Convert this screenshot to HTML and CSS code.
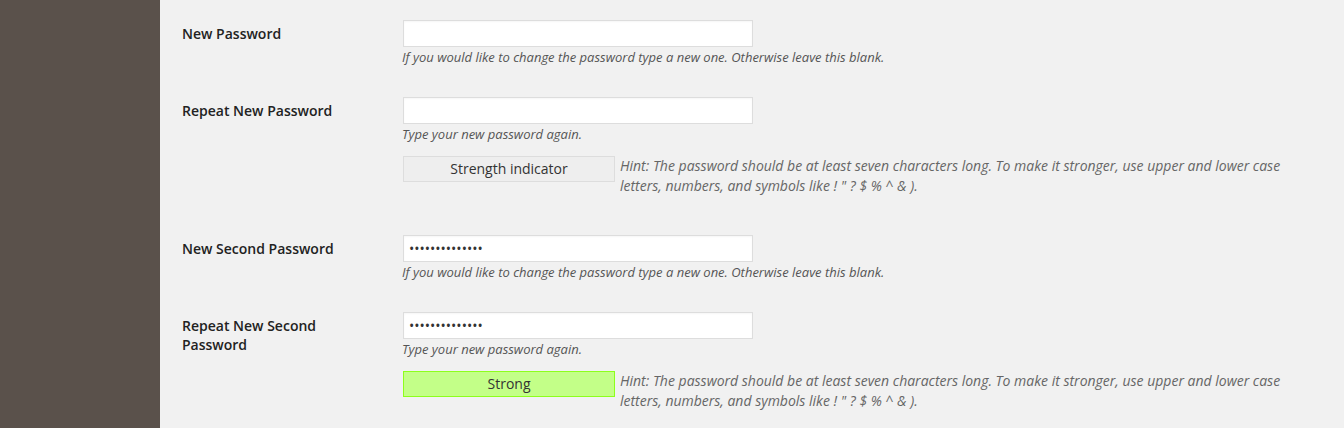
FILE: index.html
```html
<!DOCTYPE html>
<html lang="en">
<head>
<meta charset="utf-8">
<title>Profile</title>
<link rel="stylesheet" href="styles.css">
</head>
<body>
<div class="layout">
  <aside class="sidebar"></aside>
  <main class="content">
    <div class="form-row">
      <label class="row-label" for="pass1">New Password</label>
      <div class="row-field">
        <input class="text-input" id="pass1" type="password" value="">
        <p class="description">If you would like to change the password type a new one. Otherwise leave this blank.</p>
      </div>
    </div>
    <div class="form-row">
      <label class="row-label" for="pass2">Repeat New Password</label>
      <div class="row-field">
        <input class="text-input" id="pass2" type="password" value="">
        <p class="description">Type your new password again.</p>
        <div class="strength-row">
          <div class="strength">Strength indicator</div>
          <p class="hint">Hint: The password should be at least seven characters long. To make it stronger, use upper and lower case letters, numbers, and symbols like ! " ? $ % ^ &amp; ).</p>
        </div>
      </div>
    </div>
    <div class="form-row">
      <label class="row-label" for="pass3">New Second Password</label>
      <div class="row-field">
        <input class="text-input" id="pass3" type="password" value="abcdefghijklmn">
        <p class="description">If you would like to change the password type a new one. Otherwise leave this blank.</p>
      </div>
    </div>
    <div class="form-row">
      <label class="row-label" for="pass4">Repeat New Second Password</label>
      <div class="row-field">
        <input class="text-input" id="pass4" type="password" value="abcdefghijklmn">
        <p class="description">Type your new password again.</p>
        <div class="strength-row">
          <div class="strength strength-strong">Strong</div>
          <p class="hint">Hint: The password should be at least seven characters long. To make it stronger, use upper and lower case letters, numbers, and symbols like ! " ? $ % ^ &amp; ).</p>
        </div>
      </div>
    </div>
  </main>
</div>
</body>
</html>
```
FILE: styles.css
```css
html, body {
  margin: 0;
  padding: 0;
  height: 100%;
  background: #f1f1f1;
  font-family: "Open Sans", "Liberation Sans", sans-serif;
  color: #444;
}

.layout {
  display: flex;
  min-height: 100%;
}

.sidebar {
  width: 160px;
  flex: 0 0 160px;
  background: #5a514b;
}

.content {
  flex: 1;
  padding: 5px 30px 0 22px;
}

.form-row {
  display: flex;
  padding: 15px 0;
}

.row-label {
  width: 200px;
  flex: 0 0 200px;
  padding: 4px 21px 0 0;
  font-size: 14px;
  font-weight: 600;
  line-height: 19px;
  color: #222;
}

.row-field {
  flex: 1;
  min-width: 0;
}

.text-input {
  display: block;
  box-sizing: border-box;
  width: 350px;
  height: 27px;
  margin: 0;
  padding: 0 5px;
  border: 1px solid #ddd;
  background: #fff;
  font-family: "Open Sans", "Liberation Sans", sans-serif;
  font-size: 14px;
  color: #333;
  box-shadow: inset 0 1px 2px rgba(0, 0, 0, 0.04);
  outline: none;
}

.description {
  margin: 1px 0 0 -1px;
  font-size: 13px;
  line-height: 19px;
  font-style: italic;
  color: #555;
}

.strength-row {
  display: flex;
  align-items: flex-start;
  margin: 12px 0 9px;
}

.strength {
  box-sizing: border-box;
  flex: 0 0 212px;
  width: 212px;
  height: 26px;
  padding: 3px 5px;
  border: 1px solid #ddd;
  background: #eee;
  font-size: 14px;
  line-height: 18px;
  text-align: center;
  color: #333;
}

.strength-strong {
  background: #c3ff88;
  border-color: #8dff1c;
}

.hint {
  margin: 0 0 0 5px;
  font-size: 14px;
  line-height: 20px;
  font-style: italic;
  color: #666;
}
```
